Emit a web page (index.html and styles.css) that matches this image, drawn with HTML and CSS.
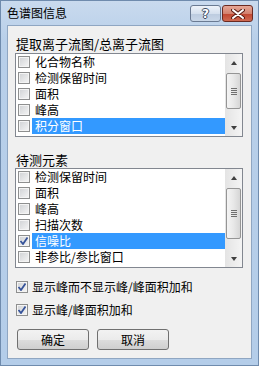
FILE: index.html
```html
<!DOCTYPE html>
<html lang="zh-CN">
<head>
    <meta charset="UTF-8">
    <meta name="viewport" content="width=device-width, initial-scale=1.0">
    <title>色谱图信息</title>
    <link rel="stylesheet" href="styles.css">
</head>
<body>
    <div class="window">
        <div class="titlebar">
            <span class="title">色谱图信息</span>
            <div class="controls">
                <button class="help">?</button>
                <button class="close">
                    <svg width="14" height="10" viewBox="0 0 14 10">
                        <path d="M2 1 L12 9 M12 1 L2 9" stroke="#5a1d14" stroke-width="4" stroke-linecap="round"/>
                        <path d="M2 1 L12 9 M12 1 L2 9" stroke="#ffffff" stroke-width="2" stroke-linecap="round"/>
                    </svg>
                </button>
            </div>
        </div>

        <div class="client">
            <div class="group-label">提取离子流图/总离子流图</div>
            <div class="listbox">
                <div class="rows">
                    <div class="row"><span class="box"></span><span class="text">化合物名称</span></div>
                    <div class="row"><span class="box"></span><span class="text">检测保留时间</span></div>
                    <div class="row"><span class="box"></span><span class="text">面积</span></div>
                    <div class="row"><span class="box"></span><span class="text">峰高</span></div>
                    <div class="row selected"><span class="box"></span><span class="text">积分窗口</span></div>
                </div>
                <div class="scrollbar">
                    <div class="arrow up"></div>
                    <div class="track"><div class="thumb thumb-ion"></div></div>
                    <div class="arrow down"></div>
                </div>
            </div>

            <div class="group-label second">待测元素</div>
            <div class="listbox">
                <div class="rows">
                    <div class="row"><span class="box"></span><span class="text">检测保留时间</span></div>
                    <div class="row"><span class="box"></span><span class="text">面积</span></div>
                    <div class="row"><span class="box"></span><span class="text">峰高</span></div>
                    <div class="row"><span class="box"></span><span class="text">扫描次数</span></div>
                    <div class="row selected"><span class="box checked"></span><span class="text">信噪比</span></div>
                    <div class="row"><span class="box"></span><span class="text">非参比/参比窗口</span></div>
                </div>
                <div class="scrollbar">
                    <div class="arrow up"></div>
                    <div class="track"><div class="thumb thumb-element"></div></div>
                    <div class="arrow down"></div>
                </div>
            </div>

            <div class="option first">
                <span class="box checked"></span>
                <span>显示峰而不显示峰/峰面积加和</span>
            </div>
            <div class="option">
                <span class="box checked"></span>
                <span>显示峰/峰面积加和</span>
            </div>

            <div class="buttons">
                <button class="btn">确定</button>
                <button class="btn">取消</button>
            </div>
        </div>
    </div>
</body>
</html>
```

FILE: styles.css
```css
body {
    margin: 0;
    font-family: "Noto Sans CJK SC", "Liberation Sans", sans-serif;
    font-size: 12px;
    color: #000;
}
.window {
    box-sizing: border-box;
    width: 259px;
    height: 366px;
    border: 1px solid #6f8bad;
    padding: 0 6px 6px 6px;
    background: linear-gradient(to bottom, #c9daee, #b8cfe9 40px, #b4cde9);
    display: flex;
    flex-direction: column;
}
.titlebar {
    height: 24px;
    display: flex;
    align-items: flex-start;
    justify-content: space-between;
}
.title {
    margin-top: 4px;
    line-height: 16px;
    font-size: 12px;
}
.controls {
    display: flex;
    gap: 1px;
    margin-top: 4px;
    margin-right: -1px;
}
.controls button {
    box-sizing: border-box;
    height: 17px;
    width: 31px;
    padding: 0;
    border-radius: 3px;
    display: flex;
    align-items: center;
    justify-content: center;
}
.help {
    border: 1px solid #6a7a92;
    background: linear-gradient(to bottom, #eef3f9, #d5e0ee 50%, #bccbdf 51%, #c9d7e8);
    font-family: "DejaVu Sans", sans-serif;
    font-weight: bold;
    font-size: 12px;
    color: #fff;
    text-shadow: 1px 0 #3c4b60, -1px 0 #3c4b60, 0 1px #3c4b60, 0 -1px #3c4b60;
}
.close {
    border: 1px solid #6b2a21;
    background: linear-gradient(to bottom, #e6a797, #d3826f 50%, #c0452f 51%, #cf6a52);
}
.client {
    flex: 1;
    background: #f0f0f0;
    border: 1px solid #8fa6c2;
    padding: 0 0 0 7px;
}
.group-label {
    font-size: 13px;
    line-height: 16px;
    margin-top: 10px;
    margin-bottom: 1px;
    padding-left: 1px;
}
.group-label.second {
    margin-top: 15px;
    margin-bottom: 0;
}
.listbox {
    box-sizing: border-box;
    width: 228px;
    border: 1px solid #828790;
    background: #fff;
    display: flex;
}
.rows {
    flex: 1;
    padding-bottom: 2px;
}
.row {
    height: 16px;
    display: flex;
    align-items: center;
}
.row .box {
    margin-left: 2px;
}
.row .text {
    flex: 1;
    height: 16px;
    line-height: 16px;
    margin-left: 2px;
    padding-left: 3px;
}
.row.selected .text {
    background: #3399ff;
    color: #fff;
}
.box {
    box-sizing: border-box;
    width: 12px;
    height: 12px;
    border: 1px solid #8e8f8f;
    background: linear-gradient(135deg, #cfd1d4, #f6f6f6);
    box-shadow: inset 0 0 0 1px #f4f4f4;
    flex-shrink: 0;
}
.box.checked {
    background:
        url("data:image/svg+xml;utf8,<svg xmlns='http://www.w3.org/2000/svg' width='10' height='10'><path d='M1.5 5 L4 8 L8.5 1.5' fill='none' stroke='%2336539a' stroke-width='1.8'/></svg>") center no-repeat,
        linear-gradient(135deg, #cfd1d4, #f6f6f6);
}
.scrollbar {
    width: 17px;
    display: flex;
    flex-direction: column;
    background: linear-gradient(to right, #e4e4e4, #f4f4f4);
}
.arrow {
    height: 17px;
    display: flex;
    align-items: center;
    justify-content: center;
}
.arrow::after {
    content: "";
    width: 0;
    height: 0;
    border-left: 3px solid transparent;
    border-right: 3px solid transparent;
}
.arrow.up::after {
    border-bottom: 4px solid #404040;
}
.arrow.down::after {
    border-top: 4px solid #404040;
}
.track {
    flex: 1;
}
.thumb {
    box-sizing: border-box;
    width: 15px;
    margin: 2px auto 0;
    border: 1px solid #959595;
    border-radius: 2px;
    background: linear-gradient(to right, #f4f4f4, #e8e8e8 50%, #d6d6d6);
    display: flex;
    align-items: center;
    justify-content: center;
}
.thumb::after {
    content: "";
    width: 6px;
    height: 7px;
    background: repeating-linear-gradient(to bottom, #6f6f6f 0 1px, transparent 1px 2px);
}
.thumb-ion {
    height: 36px;
}
.thumb-element {
    height: 51px;
}
.option {
    display: flex;
    align-items: center;
    gap: 4px;
    height: 16px;
    line-height: 16px;
    margin-top: 7px;
    padding-left: 1px;
}
.option.first {
    margin-top: 11px;
}
.buttons {
    display: flex;
    gap: 8px;
    margin-top: 11px;
    padding-left: 2px;
}
.btn {
    width: 72px;
    height: 21px;
    padding: 0;
    border: 1px solid #707070;
    border-radius: 3px;
    background: linear-gradient(to bottom, #f2f2f2, #ebebeb 50%, #dddddd 51%, #cfcfcf);
    font-family: "Noto Sans CJK SC", sans-serif;
    font-size: 12px;
    color: #000;
}
```
